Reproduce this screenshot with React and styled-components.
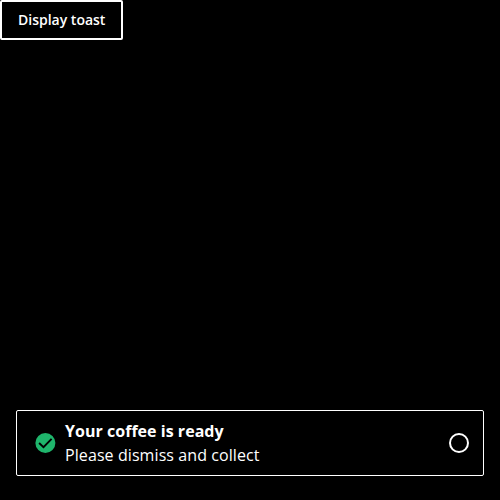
import React from "react";
import styled, { createGlobalStyle } from "styled-components";

const GlobalStyle = createGlobalStyle`
  *, *::before, *::after { box-sizing: border-box; }
  html, body { margin: 0; background: #000; }
  body { font-family: "Open Sans", sans-serif; color: #fff; }
`;

const Page = styled.main`
  display: flex;
  flex-direction: column;
  align-items: flex-start;
  justify-content: space-between;
  height: 100vh;
`;

const Button = styled.button`
  height: 40px;
  padding: 0 16px;
  border: 2px solid #fff;
  border-radius: 2px;
  background: #000;
  color: #fff;
  font: 600 14px/20px "Open Sans", sans-serif;
  white-space: nowrap;
`;

const Toast = styled.section`
  display: flex;
  align-items: center;
  align-self: stretch;
  height: 66px;
  margin: 0 16px 24px;
  padding: 0 14px 0 16px;
  border: 1px solid #fff;
  border-radius: 2px;
`;

const StatusIcon = styled.svg`
  flex: none;
  width: 24px;
  height: 24px;
`;

const Message = styled.div`
  flex: 1;
  margin-left: 8px;
  font-size: 16px;
  line-height: 24px;
`;

const Title = styled.div`
  font-weight: 700;
  letter-spacing: 0.03px;
`;

const Description = styled.div`
  font-weight: 380;
  letter-spacing: 0.085px;
`;

const Timer = styled.button`
  flex: none;
  width: 20px;
  height: 20px;
  padding: 0;
  border: 2px solid #fff;
  border-radius: 50%;
  background: transparent;
`;

export default function App() {
  return (
    <>
      <GlobalStyle />
      <Page>
        <Button type="button">Display toast</Button>
        <Toast role="status">
          <StatusIcon viewBox="0 0 24 24" aria-hidden="true">
            <circle cx="12.4" cy="12" r="10" fill="#1fb56c" />
            <path d="m6.1 12 4.4 4.1 8.1-8.3" fill="none" stroke="#000" strokeWidth="1.9" />
          </StatusIcon>
          <Message>
            <Title>Your coffee is ready</Title>
            <Description>Please dismiss and collect</Description>
          </Message>
          <Timer type="button" aria-label="Dismiss" />
        </Toast>
      </Page>
    </>
  );
}
